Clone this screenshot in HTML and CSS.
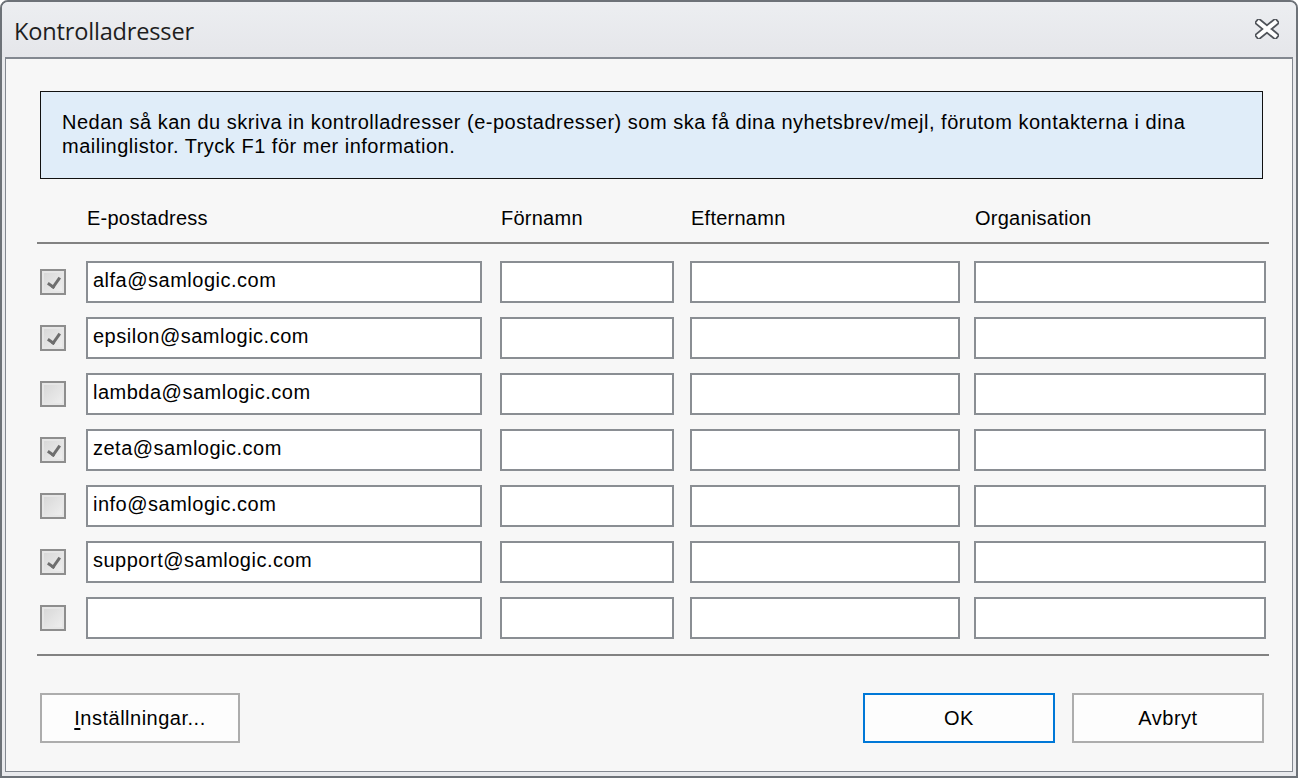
FILE: index.html
```html
<!DOCTYPE html>
<html>
<head>
<meta charset="utf-8">
<link rel="stylesheet" href="styles.css">
</head>
<body>
<div class="window">
  <div class="titlebar">
    <span class="title">Kontrolladresser</span>
    <svg class="close" width="24" height="20" viewBox="0 0 24 20">
      <path d="M4 3.5 L20 16.5 M20 3.5 L4 16.5" stroke="#50545a" stroke-width="7.5" stroke-linecap="square" fill="none"/>
      <path d="M4 3.5 L20 16.5 M20 3.5 L4 16.5" stroke="#ffffff" stroke-width="4" stroke-linecap="square" fill="none"/>
    </svg>
  </div>
  <div class="content">
    <div class="info">Nedan så kan du skriva in kontrolladresser (e-postadresser) som ska få dina nyhetsbrev/mejl, förutom kontakterna i dina mailinglistor. Tryck F1 för mer information.</div>

    <div class="grid header">
      <div></div>
      <div class="hcell">E-postadress</div>
      <div class="hcell">Förnamn</div>
      <div class="hcell">Efternamn</div>
      <div class="hcell">Organisation</div>
    </div>
    <div class="rule"></div>

    <div class="rows">
      <div class="grid row">
        <span class="cb checked"></span>
        <div class="in w1">alfa@samlogic.com</div>
        <div class="in w2"></div>
        <div class="in w3"></div>
        <div class="in w4"></div>
      </div>
      <div class="grid row">
        <span class="cb checked"></span>
        <div class="in w1">epsilon@samlogic.com</div>
        <div class="in w2"></div>
        <div class="in w3"></div>
        <div class="in w4"></div>
      </div>
      <div class="grid row">
        <span class="cb"></span>
        <div class="in w1">lambda@samlogic.com</div>
        <div class="in w2"></div>
        <div class="in w3"></div>
        <div class="in w4"></div>
      </div>
      <div class="grid row">
        <span class="cb checked"></span>
        <div class="in w1">zeta@samlogic.com</div>
        <div class="in w2"></div>
        <div class="in w3"></div>
        <div class="in w4"></div>
      </div>
      <div class="grid row">
        <span class="cb"></span>
        <div class="in w1">info@samlogic.com</div>
        <div class="in w2"></div>
        <div class="in w3"></div>
        <div class="in w4"></div>
      </div>
      <div class="grid row">
        <span class="cb checked"></span>
        <div class="in w1">support@samlogic.com</div>
        <div class="in w2"></div>
        <div class="in w3"></div>
        <div class="in w4"></div>
      </div>
      <div class="grid row">
        <span class="cb"></span>
        <div class="in w1"></div>
        <div class="in w2"></div>
        <div class="in w3"></div>
        <div class="in w4"></div>
      </div>
    </div>
    <div class="rule bottom"></div>

    <div class="buttons">
      <div class="btn"><u>I</u>nställningar...</div>
      <div class="spacer"></div>
      <div class="btn default">OK</div>
      <div class="btn">Avbryt</div>
    </div>
  </div>
</div>
</body>
</html>
```

FILE: styles.css
```css
* { box-sizing: border-box; }
html, body { margin: 0; padding: 0; }
body {
  width: 1298px;
  height: 778px;
  background: #ffffff;
  font-family: "Liberation Sans", Arial, sans-serif;
  color: #000;
  overflow: hidden;
}
.window {
  width: 1298px;
  height: 778px;
  border: 2px solid #6d7278;
  border-radius: 8px 8px 0 0;
  background: #e9eaed;
  display: flex;
  flex-direction: column;
  padding: 0 3px 4px 3px;
}
.titlebar {
  height: 55px;
  flex: none;
  display: flex;
  align-items: center;
  background: linear-gradient(#eceef1, #e5e6ea);
  margin: 0 -3px;
  padding: 3px 17px 0 12px;
  border-radius: 6px 6px 0 0;
}
.title {
  font-family: "Open Sans", "Noto Sans", sans-serif;
  font-size: 23.6px;
  color: #1e1e1e;
  flex: 1;
  letter-spacing: -0.2px;
}
.close { display: block; margin-top: -4px; }
.content {
  flex: 1;
  background: #f7f7f7;
  border: 1px solid #838890;
  border-top-width: 2px;
  padding: 32px 26px 0 31px;
}
.info {
  margin-left: 3px;
  width: 1223px;
  height: 88px;
  background: #e0edf9;
  border: 1px solid #111;
  padding: 18px 20px 0 21px;
  font-size: 20px;
  line-height: 24px;
  letter-spacing: 0.5px;
}
.grid {
  display: grid;
  grid-template-columns: 46px 414px 190px 284px 292px;
  margin-left: 3px;
}
.header {
  height: 63px;
  padding-top: 28px;
  font-size: 20px;
  letter-spacing: 0.25px;
}
.hcell { padding-left: 1px; }
.rule {
  width: 1232px;
  height: 2px;
  background: #828282;
}
.rows {
  padding-top: 17px;
  display: flex;
  flex-direction: column;
  gap: 14px;
}
.row { height: 42px; align-items: center; }
.in {
  height: 42px;
  background: #fff;
  border: 2px solid #8a8e93;
  font-size: 20px;
  line-height: 34px;
  padding-left: 5px;
  letter-spacing: 0.5px;
}
.w1 { width: 396px; }
.w2 { width: 174px; }
.w3 { width: 270px; }
.w4 { width: 292px; }
.cb {
  width: 26px;
  height: 26px;
  border: 2px solid #8e8e8e;
  background: linear-gradient(135deg, #d6d6d6, #f0f0f0);
  box-shadow: inset 0 0 0 2px #e6e6e6;
  position: relative;
}
.cb.checked::after {
  content: "";
  position: absolute;
  left: 8px;
  top: 4px;
  width: 5px;
  height: 10px;
  border-right: 3px solid #6e6e6e;
  border-bottom: 3px solid #6e6e6e;
  transform: rotate(35deg);
}
.bottom { margin-top: 15px; }
.buttons {
  display: flex;
  margin-top: 37px;
  margin-left: 3px;
  width: 1224px;
  gap: 17px;
}
.spacer { flex: 1; }
.btn {
  width: 200px;
  height: 50px;
  background: #fdfdfd;
  border: 2px solid #adadad;
  font-size: 20px;
  letter-spacing: 0.5px;
  display: flex;
  align-items: center;
  justify-content: center;
}
.buttons .btn:nth-child(3), .buttons .btn:nth-child(4) { width: 192px; }
.btn.default { border-color: #0078d7; }
.btn u { text-decoration-thickness: 2px; text-underline-offset: 3px; }
```
